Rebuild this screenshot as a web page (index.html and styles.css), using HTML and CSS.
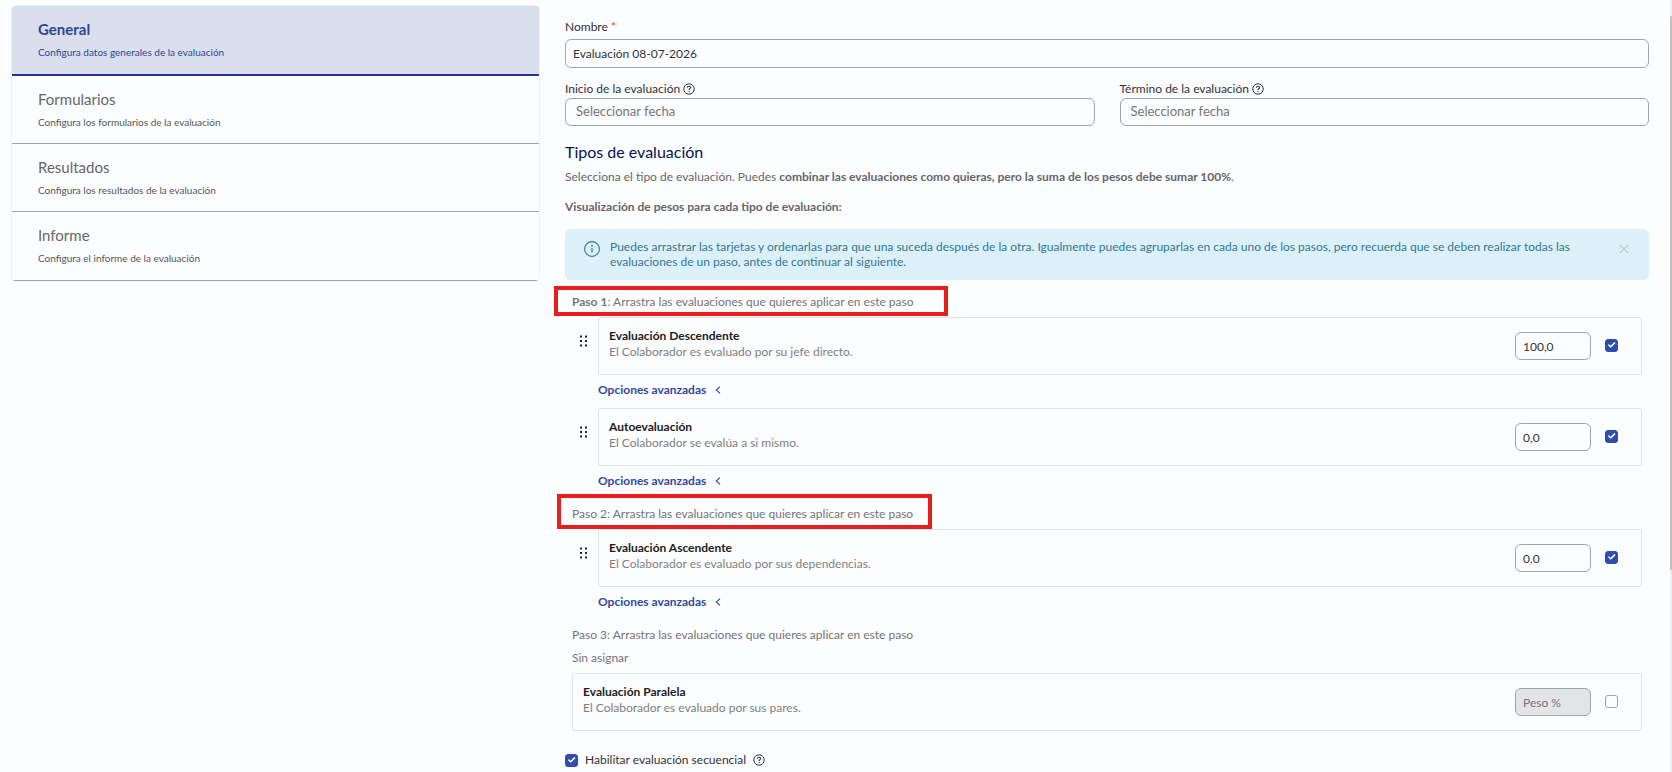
FILE: index.html
```
<!DOCTYPE html>
<html lang="es">
<head>
<meta charset="utf-8">
<title>Evaluación</title>
<link rel="stylesheet" href="styles.css">
</head>
<body>
<svg class="sprite" aria-hidden="true">
  <symbol id="help" viewBox="0 0 12 12"><circle cx="6" cy="6" r="5.2" fill="none" stroke="currentColor" stroke-width="1"/><path d="M4.4 4.8C4.4 3.8 5.1 3.2 6 3.2s1.6.6 1.6 1.4c0 1.1-1.5 1.2-1.5 2.4" fill="none" stroke="currentColor" stroke-width="1.1"/><circle cx="6.1" cy="8.6" r=".7" fill="currentColor"/></symbol>
  <symbol id="grip" viewBox="0 0 8 12"><path d="M0 .5h2v2H0zM5 .5h2v2H5zM0 5h2v2H0zM5 5h2v2H5zM0 9.5h2v2H0zM5 9.5h2v2H5z" fill="currentColor"/></symbol>
  <symbol id="chevron" viewBox="0 0 6 8"><path d="M5 .7 1.3 4 5 7.3" fill="none" stroke="currentColor" stroke-width="1.1"/></symbol>
</svg>
<div class="page">
  <nav class="tabs">
    <a class="tab tab-active" href="#general"><span class="tab-title">General</span><span class="tab-text">Configura datos generales de la evaluación</span></a>
    <a class="tab" href="#formularios"><span class="tab-title">Formularios</span><span class="tab-text">Configura los formularios de la evaluación</span></a>
    <a class="tab" href="#resultados"><span class="tab-title">Resultados</span><span class="tab-text">Configura los resultados de la evaluación</span></a>
    <a class="tab" href="#informe"><span class="tab-title">Informe</span><span class="tab-text">Configura el informe de la evaluación</span></a>
  </nav>
  <main class="main">
    <label class="label" for="nombre">Nombre <span class="required">*</span></label>
    <input class="input" id="nombre" type="text" value="Evaluación 08-07-2026">
    <div class="dates">
      <div class="field">
        <label class="label date-label" for="inicio">Inicio de la evaluación <svg class="help"><use href="#help"/></svg></label>
        <input class="input date-input" id="inicio" type="text" placeholder="Seleccionar fecha">
      </div>
      <div class="field">
        <label class="label date-label" for="termino">Término de la evaluación <svg class="help"><use href="#help"/></svg></label>
        <input class="input date-input" id="termino" type="text" placeholder="Seleccionar fecha">
      </div>
    </div>
    <h2 class="heading">Tipos de evaluación</h2>
    <p class="intro">Selecciona el tipo de evaluación. Puedes <b>combinar las evaluaciones como quieras, pero la suma de los pesos debe sumar 100%</b>.</p>
    <p class="intro weights-title"><b>Visualización de pesos para cada tipo de evaluación:</b></p>
    <div class="alert">
      <svg class="alert-icon" viewBox="0 0 16 16"><circle cx="8" cy="8" r="7.4" fill="none" stroke="currentColor" stroke-width="1.1"/><path d="M8 6.8v4.4" stroke="currentColor" stroke-width="1.3"/><circle cx="8" cy="4.7" r=".9" fill="currentColor"/></svg>
      <p class="alert-text">Puedes arrastrar las tarjetas y ordenarlas para que una suceda después de la otra. Igualmente puedes agruparlas en cada uno de los pasos, pero recuerda que se deben realizar todas las evaluaciones de un paso, antes de continuar al siguiente.</p>
      <button class="close" type="button" aria-label="Cerrar"><svg class="close-icon" viewBox="0 0 10 10"><path d="M.8.8l8.4 8.4M9.2.8.8 9.2" stroke="currentColor" stroke-width="1.1"/></svg></button>
    </div>
    <div class="steps">
      <p class="step step-marked step-one"><b>Paso 1</b>: Arrastra las evaluaciones que quieres aplicar en este paso</p>
      <div class="row">
        <svg class="grip"><use href="#grip"/></svg>
        <div class="card">
          <div class="card-body"><h3 class="card-title">Evaluación Descendente</h3><p class="card-text">El Colaborador es evaluado por su jefe directo.</p></div>
          <input class="input weight" type="text" value="100,0" aria-label="Peso Evaluación Descendente">
          <input class="check" type="checkbox" checked aria-label="Evaluación Descendente">
        </div>
      </div>
      <button class="options" type="button">Opciones avanzadas <svg class="chevron"><use href="#chevron"/></svg></button>
      <div class="row">
        <svg class="grip"><use href="#grip"/></svg>
        <div class="card">
          <div class="card-body"><h3 class="card-title">Autoevaluación</h3><p class="card-text">El Colaborador se evalúa a si mismo.</p></div>
          <input class="input weight" type="text" value="0,0" aria-label="Peso Autoevaluación">
          <input class="check" type="checkbox" checked aria-label="Autoevaluación">
        </div>
      </div>
      <button class="options" type="button">Opciones avanzadas <svg class="chevron"><use href="#chevron"/></svg></button>
      <p class="step step-marked step-two"><span>Paso 2</span>: Arrastra las evaluaciones que quieres aplicar en este paso</p>
      <div class="row">
        <svg class="grip"><use href="#grip"/></svg>
        <div class="card">
          <div class="card-body"><h3 class="card-title">Evaluación Ascendente</h3><p class="card-text">El Colaborador es evaluado por sus dependencias.</p></div>
          <input class="input weight" type="text" value="0,0" aria-label="Peso Evaluación Ascendente">
          <input class="check" type="checkbox" checked aria-label="Evaluación Ascendente">
        </div>
      </div>
      <button class="options" type="button">Opciones avanzadas <svg class="chevron"><use href="#chevron"/></svg></button>
      <p class="step"><span>Paso 3</span>: Arrastra las evaluaciones que quieres aplicar en este paso</p>
      <p class="unassigned">Sin asignar</p>
      <div class="card">
        <div class="card-body"><h3 class="card-title">Evaluación Paralela</h3><p class="card-text">El Colaborador es evaluado por sus pares.</p></div>
        <input class="input weight" type="text" placeholder="Peso %" disabled aria-label="Peso Evaluación Paralela">
        <input class="check" type="checkbox" aria-label="Evaluación Paralela">
      </div>
    </div>
    <div class="sequential">
      <input class="check" id="secuencial" type="checkbox" checked>
      <label for="secuencial">Habilitar evaluación secuencial</label>
      <svg class="help"><use href="#help"/></svg>
    </div>
  </main>
  <div class="scrollbar"><div class="thumb"></div></div>
</div>
</body>
</html>
```
FILE: styles.css
```
*, *::before, *::after { box-sizing: border-box; }
body {
  margin: 0;
  background: #fcfdff;
  color: #333;
  font-family: Lato, "Noto Sans", sans-serif;
  font-size: 12px;
  line-height: 16px;
  overflow: hidden;
}
h2, h3, p { margin: 0; }
input, button { font: inherit; color: inherit; }
b { font-weight: 700; }
.sprite { display: none; }
.page {
  display: grid;
  grid-template-columns: 527fr 1131fr 2px;
  min-height: 100vh;
  padding-left: 12px;
}
.tabs {
  align-self: start;
  margin-top: 6px;
  border-radius: 4px;
  box-shadow: 0 0 0 1px #f0f1f3;
  overflow: hidden;
}
.tab {
  display: block;
  padding: 12px 26px 14px;
  border-bottom: 1px solid #a2a3a6;
  color: #666;
  text-decoration: none;
}
.tab:last-child { padding-bottom: 15px; }
.tab-title { display: block; font-size: 15px; line-height: 22px; }
.tab-text { display: block; margin-top: 5px; font-size: 10px; line-height: 14px; color: #555; }
.tab-active { padding-bottom: 15px; background: #dadfee; border-bottom: 2px solid #1f3697; }
.tab-active, .tab-active .tab-text { color: #2d4597; }
.tab-active .tab-title { font-weight: 700; }
.main { padding: 19px 21px 0 26px; }
.label { display: block; margin-bottom: 4px; }
.required { color: #e33; }
.input {
  display: block;
  width: 100%;
  height: 29px;
  padding: 0 7px;
  border: 1px solid #a2a3a6;
  border-radius: 6px;
  background: #fcfdff;
}
.input::placeholder { color: #757575; opacity: 1; }
.dates { display: grid; grid-template-columns: 1fr 1fr; gap: 25px; margin-top: 13px; }
.date-label { display: flex; align-items: center; gap: 3px; margin-bottom: 1px; }
.help { width: 12px; height: 12px; flex: none; }
.date-input { height: 28px; padding: 0 10px 2px; font-size: 13px; }
.heading { margin-top: 15px; color: #051150; font-size: 16px; font-weight: 400; line-height: 22px; }
.intro { margin-top: 6px; color: #666; }
.weights-title { margin-top: 14px; }
.alert {
  display: flex;
  margin-top: 14px;
  padding: 10px 20px 11px 19px;
  border-radius: 6px;
  background: #dcf0f9;
  color: #337891;
}
.alert-icon { flex: none; width: 16px; height: 16px; margin: 2px 10px 0 0; }
.alert-text { flex: 1; line-height: 15px; }
.close { align-self: start; margin: 5px 0 0 45px; padding: 0; border: 0; background: none; color: #a6cbd9; }
.close-icon { display: block; width: 10px; height: 10px; }
.steps { padding: 7px 7px 0; }
.step { position: relative; height: 30px; line-height: 30px; color: #757575; }
.step-marked::after { content: ""; position: absolute; border: 4px solid #e81e1e; }
.step-one::after { left: -18px; top: -1px; width: 394px; height: 30px; }
.step-two::after { left: -15px; top: -5px; width: 375px; height: 35px; }
.row { display: flex; }
.grip { flex: none; width: 8px; height: 12px; margin: 18px 10px 0 8px; color: #222; }
.card {
  display: flex;
  flex: 1;
  align-items: center;
  height: 58px;
  padding: 0 23px 0 10px;
  border: 1px solid #e2e3e5;
  border-radius: 3px;
}
.card-body { flex: 1; padding-bottom: 4px; }
.card-title { color: #212121; font-size: 12px; font-weight: 700; line-height: 16px; }
.card-text { color: #808080; }
.weight { width: 76px; height: 28px; margin-right: 14px; }
.weight:disabled { background: #e3e4e5; }
.check {
  display: grid;
  flex: none;
  place-items: center;
  width: 13px;
  height: 13px;
  margin: 0;
  border: 1px solid #a2a3a6;
  border-radius: 3px;
  appearance: none;
}
.card .check { margin-bottom: 2px; }
.check:checked { border-color: #2f4dab; background: #2f4dab; }
.check:checked::before {
  content: "";
  width: 9px;
  height: 7px;
  background: #fff;
  clip-path: polygon(8% 50%, 22% 38%, 40% 62%, 82% 8%, 96% 22%, 42% 90%);
}
.options {
  display: flex;
  align-items: center;
  height: 33px;
  gap: 9px;
  margin-left: 26px;
  padding: 0 0 4px;
  border: 0;
  background: none;
  color: #3049a3;
  font-weight: 700;
}
.chevron { width: 6px; height: 8px; }
.unassigned { margin-bottom: 7px; color: #757575; }
.sequential { display: flex; align-items: center; gap: 7px; margin-top: 21px; }
.scrollbar { padding-top: 16px; background: #e9eff8; }
.thumb { height: 554px; border-radius: 2px; background: #c1c1c1; }
```
